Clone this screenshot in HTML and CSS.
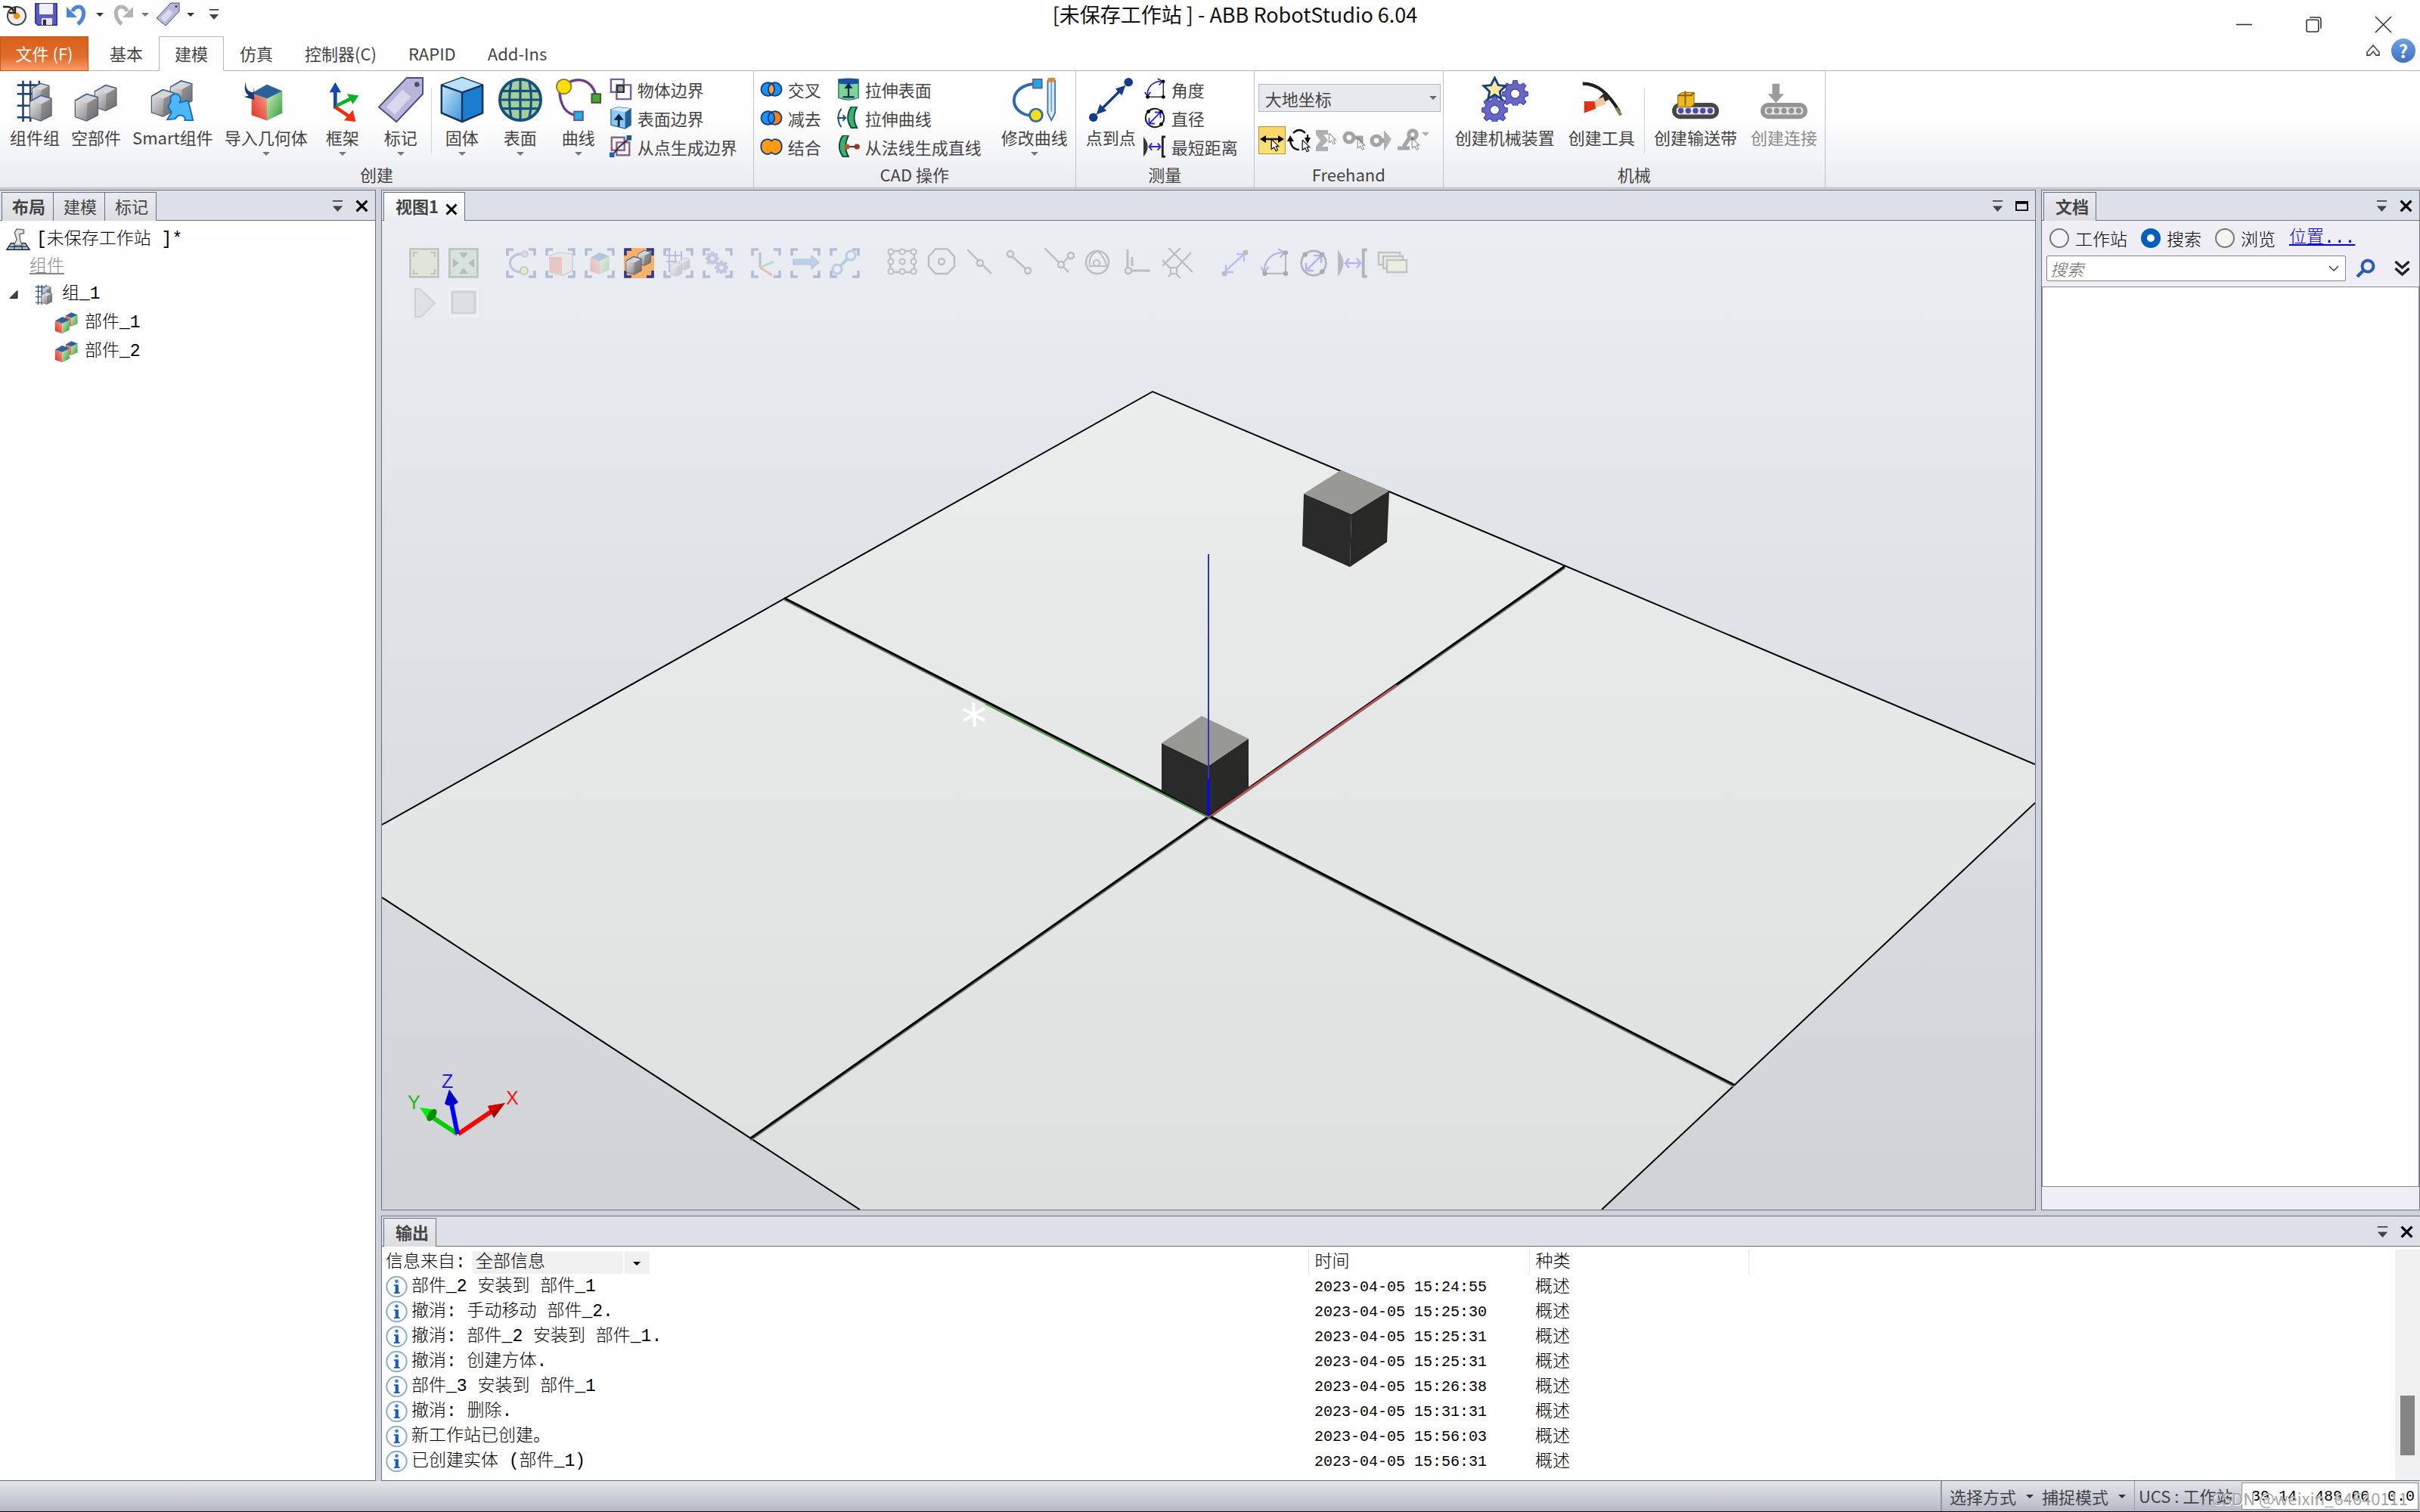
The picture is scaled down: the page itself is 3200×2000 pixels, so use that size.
FILE: index.html
```html
<!DOCTYPE html>
<html lang="zh-CN">
<head>
    <meta charset="UTF-8">
    <meta name="viewport" content="width=device-width, initial-scale=1.0">
    <title>[未保存工作站 ] - ABB RobotStudio 6.04</title>
    <link rel="stylesheet" href="styles.css">
</head>
<body>

<!-- Icon library -->
<svg class="defs" aria-hidden="true">
    <defs>
        <linearGradient id="gGray" x1="0" y1="0" x2="1" y2="1"><stop offset="0" stop-color="#f4f4f4"/><stop offset="1" stop-color="#6c6c6c"/></linearGradient>
        <linearGradient id="gRed" x1="0" y1="1" x2="1" y2="0"><stop offset="0" stop-color="#e02a1a"/><stop offset="1" stop-color="#f5a090"/></linearGradient>
        <linearGradient id="gGreen" x1="0" y1="0" x2="1" y2="1"><stop offset="0" stop-color="#cfeebc"/><stop offset="1" stop-color="#2f9c3c"/></linearGradient>
        <linearGradient id="gBlue" x1="0" y1="0" x2="1" y2="1"><stop offset="0" stop-color="#c4e4fa"/><stop offset="1" stop-color="#3f97dc"/></linearGradient>
        <linearGradient id="gPlane" x1="0" y1="0" x2="0" y2="1"><stop offset="0" stop-color="#ebedec"/><stop offset="1" stop-color="#dee0df"/></linearGradient>

        <symbol id="cube" viewBox="0 0 16 18">
            <path d="M1 5 8 1 15 3V14L8 17.500 1 15Z" fill="url(#gGray)" stroke="#54606e" stroke-width=".6"/>
            <path d="M1 5 8 1 15 3 8.500 6.500Z" fill="#d5d5d5"/>
            <path d="M8.500 6.500 15 3V14L8 17.500Z" fill="#6a6a6a" opacity=".5"/>
            <path d="M1 5 8 1 15 3" fill="none" stroke="#40659a" stroke-width=".8"/>
        </symbol>
        <symbol id="rgbcube" viewBox="0 0 16 18">
            <path d="M1 5 8 7.500V17.500L1 15Z" fill="url(#gRed)"/>
            <path d="M8 7.500 15 4V14L8 17.500Z" fill="url(#gGreen)"/>
            <path d="M1 5 8 1 15 4 8 7.500Z" fill="#2b619c"/>
        </symbol>
        <symbol id="gear" viewBox="0 0 20 20">
            <path d="M8.500 1h3l.5 2.500 2 .9 2.200-1.500 2 2.100-1.500 2.200.8 2 2.500.5v2.800l-2.500.5-.8 2 1.500 2.200-2 2-2.200-1.500-2 .9-.5 2.400h-3L8 18.600l-2-.9-2.200 1.500-2-2 1.500-2.200-.8-2L0 12.500V9.700l2.500-.5.8-2L1.800 5l2-2.100L6 4.400l2-.9ZM10 7.500a3.500 3.500 0 1 0 .01 0Z" fill="#6666c8" stroke="#4444a0" stroke-width=".7" fill-rule="evenodd"/>
        </symbol>

        <symbol id="i-group" viewBox="0 0 32 32">
            <path d="M8 3V31M13 3V31M19 3V14M4 6H23M4 12H14M4 20H14M4 28H14" fill="none" stroke="#1d3f78" stroke-width="1.300"/>
            <use href="#cube" x="13" y="4" width="14" height="15"/><use href="#cube" x="11" y="12" width="18" height="19"/>
        </symbol>
        <symbol id="i-part" viewBox="0 0 32 32">
            <use href="#cube" x="14" y="5" width="17" height="19"/><use href="#cube" x="0" y="11" width="19" height="20"/>
        </symbol>
        <symbol id="i-smart" viewBox="0 0 32 32">
            <use href="#cube" x="13" y="2" width="18" height="19"/><use href="#cube" x="0" y="8" width="19" height="20"/>
            <path d="M15 17a3.500 3.500 0 1 1 5.500 1l6-1.500 1.500 5 2 8.500h-5.500c1-3.500-4.500-5-6.500-1l-5.500.5 3-5-2.500-3.500Z" fill="#4cb8f5" stroke="#1b6cb5"/>
        </symbol>
        <symbol id="i-import" viewBox="0 0 32 32">
            <use href="#rgbcube" x="2" y="4" width="29" height="27"/>
            <path d="M2 4c0 5 2 7 6 7l-1-4 1 9-7-2 3-1C1 11 1 7 2 4Z" fill="#163a7c"/>
        </symbol>
        <symbol id="i-frame" viewBox="0 0 32 32">
            <path d="M11 22V9" stroke-width="2.400" fill="none" stroke="#1446b4"/>
            <path d="M11 4l4 7H7Z" fill="#1446b4"/><path d="M12 20l10-5" stroke="#0db02c" stroke-width="2.400"/><path d="M27 13l-8-1 4 7Z" fill="#0db02c"/>
            <path d="M11 21l9 6" stroke="#f02c10" stroke-width="2.400"/><path d="M25 31l-8-1 6-7Z" fill="#f02c10"/>
        </symbol>
        <symbol id="i-tag" viewBox="0 0 32 32">
            <path d="M1 21 20 1h11v11L13 31Z" fill="#b6b7da" stroke="#4a4d78"/><path d="M6 21 17 9l6 5-11 12Z" fill="#d8d8ee"/><circle cx="27" cy="5.500" r="1.700" fill="#4a4d78"/>
        </symbol>
        <symbol id="i-solid" viewBox="0 0 32 32">
            <path d="M2 6 16 1l14 5v19l-14 6-14-6Z" fill="#1a7ccc" stroke="#17345f" stroke-width="1.300"/>
            <path d="M2 6 16 1l14 5-14 5Z" fill="#b8e0fa"/><path d="M2.600 7 16 11.500V30L2.600 24.500Z" fill="url(#gBlue)"/><path d="M2 6l14 5 14-5M16 11v20" fill="none" stroke="#17345f" stroke-width="1.200"/>
        </symbol>
        <symbol id="i-globe" viewBox="0 0 32 32">
            <circle cx="16" cy="16" r="14" fill="#a3cf98" stroke="#17507e" stroke-width="2"/>
            <path d="M3 10H29M2 16H30M3 22H29M16 2V30M10 3C8 12 8 20 10 29M22 3C24 12 24 20 22 29" fill="none" stroke="#17507e" stroke-width="1.600"/>
        </symbol>
        <symbol id="i-curve" viewBox="0 0 32 32">
            <path d="M6 7C12 0 25 0 28 14M3 8C3 20 7 26 16 27" fill="none" stroke="#713a96" stroke-width="1.800"/>
            <circle cx="6" cy="7" r="5" fill="#ffdf00" stroke="#908030"/><rect x="25" y="12" width="6" height="6" fill="#46a832" stroke="#3b5c2c"/><rect x="13" y="24" width="6" height="6" fill="#22b0e0" stroke="#705090"/>
        </symbol>
        <symbol id="i-modcurve" viewBox="0 0 32 32">
            <path d="M18 5C-3 5-3 27 16 27" fill="none" stroke="#2c6aa8" stroke-width="2"/><rect x="15" y="2" width="6" height="6" fill="#18aee0" stroke="#7458a0"/>
            <circle cx="17" cy="26.500" r="4.300" fill="#f8de16" stroke="#2c6aa8" stroke-width="1.400"/><path d="M25 3h5v22l-2.500 5-2.500-5Z" fill="#dcecf8" stroke="#4478a8"/><path d="M25 1h5v3h-5Z" fill="#d88c2c"/><path d="M27.500 4V24" stroke="#7aa4c8"/>
        </symbol>
        <symbol id="i-p2p" viewBox="0 0 32 32">
            <circle cx="28" cy="4" r="3" fill="#143c8c"/><circle cx="4" cy="28" r="3" fill="#143c8c"/><path d="M9 23 23 9" stroke="#143c8c" stroke-width="1.800"/><path d="M26 6l-2.500 7-4.500-4.500ZM6 26l2.500-7 4.500 4.500Z" fill="#143c8c"/>
        </symbol>
        <symbol id="i-mech" viewBox="0 0 32 32">
            <use href="#gear" x="14" y="2" width="18" height="18"/><use href="#gear" x="0" y="13" width="18" height="18"/>
            <path d="M9 1l2.500 5 5 .5-4 4 1 5-4.500-3-4.500 3 1-5-4-4 5-.5Z" fill="#ffe9a0" stroke="#18407e" stroke-width="1.500"/>
        </symbol>
        <symbol id="i-tool" viewBox="0 0 32 32">
            <path d="M3 5C13 5 20 11 28 24" fill="none" stroke="#20201e" stroke-width="2.200"/><path d="M27 21l3 5-2 1-3-5Z" fill="#8c8258"/><path d="M18 11l4 4-5 3-3-3Z" fill="#2a2a28"/><path d="M10 17l7-3 2 5-9 3Z" fill="#f0c8a0"/><path d="M4 17h7l1 5-8 3Z" fill="#e03214"/>
        </symbol>
        <symbol id="i-conveyor" viewBox="0 0 32 32">
            <rect x="0" y="18" width="32" height="11" rx="5.500" fill="#474747"/><rect x="3" y="21" width="26" height="5" rx="2" fill="#e8e8f0"/>
            <g fill="#4a4ab4"><circle cx="6" cy="23.500" r="1.900"/><circle cx="11" cy="23.500" r="1.900"/><circle cx="16" cy="23.500" r="1.900"/><circle cx="21" cy="23.500" r="1.900"/><circle cx="26" cy="23.500" r="1.900"/></g>
            <path d="M4 13l3-2h8v8l-2 2H4Z" fill="#f0b820" stroke="#997010" stroke-width=".6"/><path d="M9 10v10M4 13h9l2-2" fill="none" stroke="#8a5c10"/>
        </symbol>
        <symbol id="i-connect" viewBox="0 0 32 32">
            <rect x="0" y="18" width="32" height="11" rx="5.500" fill="#949494"/><rect x="3" y="21" width="26" height="5" rx="2" fill="#e4e4e4"/>
            <g fill="#949494"><circle cx="6" cy="23.500" r="1.900"/><circle cx="11" cy="23.500" r="1.900"/><circle cx="16" cy="23.500" r="1.900"/><circle cx="21" cy="23.500" r="1.900"/><circle cx="26" cy="23.500" r="1.900"/></g>
            <path d="M8 5h5v7h3l-5.500 6L5 12h3Z" fill="#9c9c9c"/>
        </symbol>

        <symbol id="s-solidb" viewBox="0 0 16 16"><path d="M1 1h9v9H1ZM5 5h10v10H5Z" fill="none" stroke="#74609c" stroke-width="1.300"/><rect x="5.500" y="5.500" width="4.500" height="4.500" fill="#8ca08c" stroke="#202830"/></symbol>
        <symbol id="s-surfb" viewBox="0 0 16 16"><path d="M1 2l5-1.500 9 1V13l-4 2.500-10-2.500Z" fill="#8cc8f4" stroke="#2b5c90" stroke-width=".6"/><path d="M1 2l5-1.500 9 1-4 2.500Z" fill="#d4ecfc"/><path d="M11 4l4-2.500V13l-4 2.500Z" fill="#235f9c"/><path d="M6.500 14V8" stroke="#10243c" stroke-width="1.500"/><path d="M6.500 5l3.500 4.500H3Z" fill="#10243c"/></symbol>
        <symbol id="s-ptsb" viewBox="0 0 16 16"><path d="M1.500 1.500h9v9h-9ZM5 5h9v9H5Z" fill="none" stroke="#8c6484" stroke-width="1.300"/><path d="M2 14l5-6 7-6" fill="none" stroke="#1c2c58"/><rect x="12" y="0" width="3.500" height="3.500" fill="#22548c"/><rect x="0" y="12" width="3.500" height="3.500" fill="#1c64b4"/></symbol>
        <symbol id="s-and" viewBox="0 0 16 16"><circle cx="5.500" cy="8" r="4.700" fill="#1c90f4"/><circle cx="10.500" cy="8" r="4.700" fill="#1c90f4"/><path d="M8 4a4.700 4.700 0 0 1 0 8 4.700 4.700 0 0 1 0-8Z" fill="#ffa030"/><circle cx="5.500" cy="8" r="4.700" fill="none" stroke="#173f80"/><circle cx="10.500" cy="8" r="4.700" fill="none" stroke="#173f80"/></symbol>
        <symbol id="s-sub" viewBox="0 0 16 16"><circle cx="5.500" cy="8" r="4.700" fill="#1c90f4" stroke="#173f80"/><circle cx="10.500" cy="8" r="4.700" fill="#ff7c10" stroke="#173f80"/><path d="M8 4a4.700 4.700 0 0 1 0 8 4.700 4.700 0 0 1 0-8Z" fill="#1c90f4" stroke="#173f80"/></symbol>
        <symbol id="s-or" viewBox="0 0 16 16"><path d="M8 4C6 1.500.7 3 .7 8S6 14.500 8 12c2 2.500 7.300 1 7.300-4S10 1.500 8 4Z" fill="#ff9c14" stroke="#173f80"/></symbol>
        <symbol id="s-exsurf" viewBox="0 0 16 16"><path d="M1 1h14v13q-7 3-14 0Z" fill="#7cd49c" stroke="#1c7458" stroke-width=".7"/><path d="M1 1q7-1.500 14 0v3q-7 1-14 0Z" fill="#1c50a0"/><path d="M8 13V6M4 13.500h8" stroke="#0c2c4c" stroke-width="1.200"/><path d="M8 3.500l3 4H5Z" fill="#0c2c4c"/></symbol>
        <symbol id="s-excurve" viewBox="0 0 16 16"><path d="M3 1.500C0 5 0 11 3 14.500M0 8h6M4 6l2 2-2 2" fill="none" stroke="#1c4888"/><path d="M10 0h4q-4 8 0 15h-4Q5 8 10 0Z" fill="#3cb070" stroke="#0c4838"/></symbol>
        <symbol id="s-normal" viewBox="0 0 16 16"><path d="M4 0h4Q4 8 8 15H4Q-1 8 4 0Z" fill="#3cb070" stroke="#0c4838"/><path d="M6 8h8" stroke="#502010"/><circle cx="7" cy="8" r="1.900" fill="#c8502c"/><circle cx="14" cy="8" r="1.900" fill="#a03018"/></symbol>
        <symbol id="s-angle" viewBox="0 0 16 16"><path d="M14 3v10.500H3" fill="none" stroke="#303030" stroke-width=".8"/><path d="M3 13C2 7 7 2 13 2.500M10 .5l3.500 2L11 5M1 10l1.800 3L5 10" fill="none" stroke="#2c2cb0" stroke-width=".9"/><circle cx="14" cy="13.500" r="1.300"/><circle cx="3" cy="13.500" r="1.300"/><circle cx="14" cy="2.500" r="1.200"/></symbol>
        <symbol id="s-diam" viewBox="0 0 16 16"><circle cx="8" cy="8" r="6.500" fill="none" stroke="#202020" stroke-width="1.100"/><path d="M4.500 11.500l7-7M8 4h4v4M4 8v4h4" fill="none" stroke="#2424e8"/><circle cx="3.500" cy="3.500" r="1.300"/><circle cx="12.500" cy="3.500" r="1.300"/><circle cx="12.500" cy="12.500" r="1.300"/></symbol>
        <symbol id="s-dist" viewBox="0 0 16 16"><path d="M0 1q6 7 0 14Z" fill="#383838"/><path d="M15.500 1H13.500v14h2" fill="none" stroke="#202020" stroke-width="1.500"/><path d="M4 8h8M6 5.500 4 8l2 2.500M10 5.500 12 8l-2 2.500" fill="none" stroke="#2424e8"/></symbol>

        <symbol id="cursor" viewBox="0 0 10 14"><path d="M1 0v11l3-2 2 4 2-1-2-4h3Z" fill="#fff" stroke="#111"/></symbol>
        <symbol id="f-move" viewBox="0 0 16 16"><path d="M2 7h12M8 7v5" stroke="#111" stroke-width="1.200"/><path d="M0 7l4-2.500v5ZM16 7l-4-2.500v5Z"/><use href="#cursor" x="7" y="7" width="6" height="8.500"/></symbol>
        <symbol id="f-rot" viewBox="0 0 16 16"><path d="M4 3q4-4 8 0M2 8q1 6 6 6M13.500 4v3" fill="none" stroke="#111" stroke-width="1.100"/><path d="M0 8.500l2-4 2.500 4ZM11.500 6h4l-2 4Z"/><use href="#cursor" x="9.500" y="7.500" width="6" height="8.500"/></symbol>
        <symbol id="f-a" viewBox="0 0 16 16"><path d="M1 1h8v3H6l3 4-4 4h4v3H1v-3l3-4-3-4Z" fill="#b0b0b0"/><use href="#cursor" x="9" y="3" width="6" height="8" opacity=".4"/></symbol>
        <symbol id="f-b" viewBox="0 0 16 16"><circle cx="5" cy="6" r="3" fill="none" stroke="#a4a4a4" stroke-width="2.600"/><path d="M8 6h5v4" fill="none" stroke="#a4a4a4" stroke-width="2.500"/><use href="#cursor" x="10" y="6" width="6" height="9" opacity=".4"/></symbol>
        <symbol id="f-c" viewBox="0 0 16 16"><circle cx="5" cy="8" r="3" fill="none" stroke="#a4a4a4" stroke-width="2.600"/><path d="M7 8h5" stroke="#a4a4a4" stroke-width="3"/><path d="M10 1l5 6-5 8Z" fill="#b0b0b0"/></symbol>
        <symbol id="f-d" viewBox="0 0 16 16"><circle cx="11" cy="4" r="2.600" fill="none" stroke="#a4a4a4" stroke-width="2.500"/><path d="M9 6l-4 6M1 13h8" stroke="#a4a4a4" stroke-width="2.600"/><use href="#cursor" x="10" y="6" width="6" height="9" opacity=".4"/></symbol>

        <path id="corners" d="M1 5V1h4M15 1h4v4M19 15v4h-4M5 19H1v-4" fill="none" stroke="#2c3c94" stroke-width="1.800"/>
        <symbol id="v-all" viewBox="0 0 20 20"><rect x=".7" y=".7" width="18.500" height="18.500" fill="#c8d49c" stroke="#4c5840" stroke-width="1.300"/><path d="M3 6V3h3M14 3h3v3M17 14v3h-3M6 17H3v-3" fill="none" stroke="#4c5840"/></symbol>
        <symbol id="v-center" viewBox="0 0 20 20"><rect x=".7" y=".7" width="18.500" height="18.500" fill="#a8cca0" stroke="#4c5840" stroke-width="1.300"/><path d="M10 7L7 3h6ZM10 13l-3 4h6ZM7 10L3 7v6ZM13 10l4-3v6Z" fill="#2c3c60"/></symbol>
        <symbol id="v-curve" viewBox="0 0 20 20"><use href="#corners"/><path d="M12 4C0 3 0 16 10 16" fill="none" stroke="#3c68a4" stroke-width="1.600"/><circle cx="12.500" cy="4" r="2" fill="#90b0f0" stroke="#d06090"/><circle cx="12" cy="15" r="2.500" fill="#f4ec30" stroke="#3c68a4"/></symbol>
        <symbol id="v-surf" viewBox="0 0 20 20"><use href="#corners"/><path d="M3 5l6-2 9 1v11l-6 3-9-2Z" fill="#e6dcdc" stroke="#707070" stroke-width=".6"/><path d="M3 6h8v11l-8-1Z" fill="#ec6050"/></symbol>
        <symbol id="v-body" viewBox="0 0 20 20"><use href="#corners"/><use href="#rgbcube" x="2" y="2" width="16" height="16"/></symbol>
        <symbol id="v-part" viewBox="0 0 20 20"><rect width="20" height="20" fill="#f9b068"/><use href="#corners"/><use href="#cube" x="8" y="1" width="11" height="11"/><use href="#cube" x="0" y="5" width="13" height="13"/></symbol>
        <symbol id="v-grp" viewBox="0 0 20 20"><use href="#corners"/><path d="M4 2v14M8 2v8M2 5h10M2 9h7M12 2v6" stroke="#3a4a9c"/><use href="#cube" x="9" y="6" width="10" height="9"/><use href="#cube" x="4" y="9" width="9" height="10"/></symbol>
        <symbol id="v-mech" viewBox="0 0 20 20"><use href="#corners"/><use href="#gear" x="2" y="2" width="9" height="9"/><use href="#gear" x="8" y="8" width="9" height="9"/></symbol>
        <symbol id="v-frame" viewBox="0 0 20 20"><use href="#corners"/><path d="M6 13V3" stroke="#3a4a9c" stroke-width="1.500"/><path d="M6 13l9-4" stroke="#40b850" stroke-width="1.700"/><path d="M6 13l8 5" stroke="#e84030" stroke-width="1.500"/></symbol>
        <symbol id="v-arrow" viewBox="0 0 20 20"><use href="#corners"/><path d="M2 7.500h12V5l5 4.500-5 4.500v-3H2Z" fill="#4c84e8" stroke="#3a5a9c" stroke-width=".6"/></symbol>
        <symbol id="v-path" viewBox="0 0 20 20"><use href="#corners"/><circle cx="5" cy="14" r="3" fill="none" stroke="#3c78c0" stroke-width="1.500"/><circle cx="14" cy="5" r="3" fill="none" stroke="#3c78c0" stroke-width="1.500"/><path d="M7 12l5-5" stroke="#3c78c0" stroke-width="2"/></symbol>
        <symbol id="v-snap" viewBox="0 0 20 20"><path d="M2 2h16v14H2Z" fill="none" stroke="#444" stroke-width="1.200"/><g fill="#e8ecf0" stroke="#444"><circle cx="2.500" cy="2.500" r="1.800"/><circle cx="10" cy="2.500" r="1.800"/><circle cx="17.500" cy="2.500" r="1.800"/><circle cx="2.500" cy="9" r="1.800"/><circle cx="10" cy="9" r="1.800"/><circle cx="17.500" cy="9" r="1.800"/><circle cx="2.500" cy="15.500" r="1.800"/><circle cx="10" cy="15.500" r="1.800"/><circle cx="17.500" cy="15.500" r="1.800"/></g></symbol>
        <symbol id="v-snapc" viewBox="0 0 20 20"><path d="M6 .7h8l4.500 5v6.500L14 17H6l-4.500-5V5.700Z" fill="none" stroke="#444" stroke-width="1.200"/><circle cx="10" cy="9" r="2" fill="none" stroke="#444" stroke-width="1.200"/></symbol>
        <symbol id="v-mid" viewBox="0 0 20 20"><path d="M1 1l16 16" stroke="#444" stroke-width="1.200"/><circle cx="9.500" cy="10" r="2" fill="#e8ecf0" stroke="#444" stroke-width="1.200"/></symbol>
        <symbol id="v-end" viewBox="0 0 20 20"><path d="M3 4l12 11" stroke="#444" stroke-width="1.200"/><circle cx="3.500" cy="4" r="2" fill="#e8ecf0" stroke="#444" stroke-width="1.200"/><circle cx="15" cy="15" r="2" fill="#e8ecf0" stroke="#444" stroke-width="1.200"/></symbol>
        <symbol id="v-edge" viewBox="0 0 20 20"><path d="M0 0l16 16M11 11l6-6" stroke="#444" stroke-width="1.200"/><circle cx="11" cy="11" r="2" fill="#e8ecf0" stroke="#444" stroke-width="1.200"/><circle cx="17.500" cy="5" r="2" fill="#e8ecf0" stroke="#444" stroke-width="1.200"/></symbol>
        <symbol id="v-grav" viewBox="0 0 20 20"><circle cx="9" cy="9.500" r="7.500" fill="none" stroke="#444" stroke-width="1.200"/><path d="M9 2Q3 5 4 12h11Q14 6 9 2" fill="none" stroke="#444"/><circle cx="8.500" cy="10" r="2" fill="none" stroke="#444"/></symbol>
        <symbol id="v-orig" viewBox="0 0 20 20"><path d="M3 1v14h15M6 6v6" fill="none" stroke="#444" stroke-width="1.500"/><circle cx="3.500" cy="15" r="2" fill="#e8ecf0" stroke="#444" stroke-width="1.200"/></symbol>
        <symbol id="v-grid" viewBox="0 0 20 20"><path d="M4 0l16 16M0 8l12 12M0 12L12 0M4 19L19 3" fill="none" stroke="#444" stroke-width="1.200"/><rect x="5.500" y="13" width="4" height="4" fill="#e8ecf0" stroke="#444"/></symbol>
        <symbol id="v-p2p" viewBox="0 0 20 20"><path d="M4 15L16 4M4 11v5h5M11 4h5v5" fill="none" stroke="#4444ff" stroke-width="1.200"/><circle cx="3" cy="17" r="1.800" fill="#444"/><circle cx="17" cy="3" r="1.800" fill="#444"/></symbol>
        <symbol id="v-stack" viewBox="0 0 20 20"><g fill="#f2f2b8" stroke="#555" stroke-width="1.200"><path d="M1 3h14v8H1Z"/><path d="M4 5.500h13v8H4Z"/><path d="M6.500 8H19.500v8h-13Z"/></g></symbol>
        <symbol id="v-play" viewBox="0 0 20 20"><path d="M4 1h3l10 9.500L8 19.500H4Z" fill="#c4c4c8" stroke="#8c8c90"/></symbol>
        <symbol id="v-stop" viewBox="0 0 20 20"><rect width="20" height="20" fill="#fff"/><rect x="2.500" y="3" width="15" height="14" fill="#c0c0c4" stroke="#909094" stroke-width="1.500"/></symbol>

        <symbol id="info" viewBox="0 0 16 16"><circle cx="8" cy="8" r="7.300" fill="#fafdff" stroke="#8ab0c4" stroke-width="1.100"/><circle cx="8" cy="4" r="1.300" fill="#3a7ce8"/><path d="M6 6.500H9.300V12h1v1H6v-1h1V7.500H6Z" fill="#1c58c4"/></symbol>
        <symbol id="pin" viewBox="0 0 16 18"><path d="M1 1h14v2H1ZM1 9h14l-7 8Z" fill="#444"/></symbol>
        <symbol id="x" viewBox="0 0 16 16"><path d="M1.500 1.500l13 13M14.500 1.500l-13 13" stroke="#000" stroke-width="3" fill="none"/></symbol>
        <symbol id="i-robot" viewBox="0 0 16 16"><path d="M3 10.500h10l3 4.500H0Z" fill="#b8c8e4" stroke="#1c2838" stroke-width=".8"/><path d="M2 13h12M6 11l-1 4M10 11l1 4" stroke="#1c2838" stroke-width=".6"/><path d="M5 12h6l-1.500-3L9 4l3-.5V1L7 .5 5.500 3 7 8Z" fill="#e4e4e4" stroke="#6c7074" stroke-width=".8"/></symbol>
        <symbol id="i-rgbparts" viewBox="0 0 16 16"><use href="#rgbcube" x="6" y="0" width="11" height="11"/><use href="#rgbcube" x="-1" y="3" width="12" height="13"/></symbol>
        <symbol id="q-app" viewBox="0 0 16 16"><circle cx="9" cy="9" r="6" fill="#eee" stroke="#444"/><circle cx="9" cy="9" r="2.200" fill="#f09010"/><path d="M0 3h3q3 0 4 3M8 3v4H4" fill="none" stroke="#222" stroke-width="1.200"/></symbol>
        <symbol id="q-save" viewBox="0 0 16 16"><path d="M1 1h14v14H2.500L1 13.500Z" fill="#5c5cc0" stroke="#3c3c98"/><path d="M3.500 1h9v7h-9Z" fill="#eef0fc"/><path d="M5 10.500h7V15H5Z" fill="#e4e4ec"/><path d="M6 11.500h2V15H6Z" fill="#282850"/></symbol>
        <symbol id="q-undo" viewBox="0 0 16 16"><path d="M8.500 14.500C14 10 13 3 9 3 7 3 5.500 4.500 5 6" fill="none" stroke="#4c84dc" stroke-width="2.600"/><path d="M1 3v7h7Z" fill="#4c84dc"/></symbol>
        <symbol id="q-redo" viewBox="0 0 16 16"><path d="M7.500 14.500C2 10 3 3 7 3c2 0 3.500 1.500 4 3" fill="none" stroke="#b4b4b4" stroke-width="2.600"/><path d="M15 3v7H8Z" fill="#b4b4b4"/></symbol>
    </defs>
</svg>

<header class="titlebar">
    <div class="quick-access">
        <button type="button" aria-label="应用"><svg><use href="#q-app"/></svg></button>
        <button type="button" aria-label="保存"><svg><use href="#q-save"/></svg></button>
        <button type="button" aria-label="撤消"><svg><use href="#q-undo"/></svg></button>
        <i class="arrow dark"></i>
        <button type="button" aria-label="恢复"><svg><use href="#q-redo"/></svg></button>
        <i class="arrow"></i>
        <button type="button" aria-label="标记"><svg><use href="#i-tag"/></svg></button>
        <i class="arrow dark"></i>
        <button type="button" class="customize" aria-label="自定义"><svg><use href="#pin"/></svg></button>
    </div>
    <h1>[未保存工作站 ] - ABB RobotStudio 6.04</h1>
    <div class="window-buttons">
        <button type="button" aria-label="最小化"><svg viewBox="0 0 20 20"><path d="M0 10h20" stroke="#333" stroke-width="1.500"/></svg></button>
        <button type="button" aria-label="还原"><svg viewBox="0 0 20 20"><path d="M1 6q0-2 2-2h11q2 0 2 2v11q0 2-2 2H3q-2 0-2-2ZM5 1h11q3 0 3 3v11" fill="none" stroke="#333" stroke-width="1.500"/></svg></button>
        <button type="button" aria-label="关闭"><svg viewBox="0 0 20 20"><path d="M0 0l20 20M20 0 0 20" stroke="#333" stroke-width="1.500"/></svg></button>
    </div>
</header>

<nav class="ribbon-tabs">
    <button type="button" class="file-tab">文件 (F)</button>
    <button type="button" class="tab-basic">基本</button>
    <button type="button" class="active">建模</button>
    <button type="button">仿真</button>
    <button type="button">控制器(C)</button>
    <button type="button">RAPID</button>
    <button type="button">Add-Ins</button>
    <div class="ribbon-help">
        <button type="button" aria-label="折叠功能区"><svg class="chev" viewBox="0 0 20 16"><path d="M2 10l8-9 8 9v4h-4l-4-5-4 5H2Z" fill="#fff" stroke="#555" stroke-width="1.800"/></svg></button>
        <button type="button" class="help">?</button>
    </div>
</nav>

<section class="ribbon">
    <div class="group">
        <div class="group-body">
            <button type="button" class="big"><svg><use href="#i-group"/></svg><span>组件组</span></button>
            <button type="button" class="big"><svg><use href="#i-part"/></svg><span>空部件</span></button>
            <button type="button" class="big"><svg><use href="#i-smart"/></svg><span>Smart组件</span></button>
            <button type="button" class="big"><svg><use href="#i-import"/></svg><span>导入几何体</span><i class="arrow"></i></button>
            <button type="button" class="big"><svg><use href="#i-frame"/></svg><span>框架</span><i class="arrow"></i></button>
            <button type="button" class="big"><svg><use href="#i-tag"/></svg><span>标记</span><i class="arrow"></i></button>
            <div class="divider"></div>
            <button type="button" class="big"><svg><use href="#i-solid"/></svg><span>固体</span><i class="arrow"></i></button>
            <button type="button" class="big"><svg><use href="#i-globe"/></svg><span>表面</span><i class="arrow"></i></button>
            <button type="button" class="big"><svg><use href="#i-curve"/></svg><span>曲线</span><i class="arrow"></i></button>
            <div class="stack">
                <button type="button"><svg><use href="#s-solidb"/></svg>物体边界</button>
                <button type="button"><svg><use href="#s-surfb"/></svg>表面边界</button>
                <button type="button"><svg><use href="#s-ptsb"/></svg>从点生成边界</button>
            </div>
        </div>
        <div class="group-name">创建</div>
    </div>
    <div class="group">
        <div class="group-body">
            <div class="stack">
                <button type="button"><svg><use href="#s-and"/></svg>交叉</button>
                <button type="button"><svg><use href="#s-sub"/></svg>减去</button>
                <button type="button"><svg><use href="#s-or"/></svg>结合</button>
            </div>
            <div class="stack">
                <button type="button"><svg><use href="#s-exsurf"/></svg>拉伸表面</button>
                <button type="button"><svg><use href="#s-excurve"/></svg>拉伸曲线</button>
                <button type="button"><svg><use href="#s-normal"/></svg>从法线生成直线</button>
            </div>
            <button type="button" class="big"><svg><use href="#i-modcurve"/></svg><span>修改曲线</span><i class="arrow"></i></button>
        </div>
        <div class="group-name">CAD 操作</div>
    </div>
    <div class="group">
        <div class="group-body">
            <button type="button" class="big"><svg><use href="#i-p2p"/></svg><span>点到点</span></button>
            <div class="stack">
                <button type="button"><svg><use href="#s-angle"/></svg>角度</button>
                <button type="button"><svg><use href="#s-diam"/></svg>直径</button>
                <button type="button"><svg><use href="#s-dist"/></svg>最短距离</button>
            </div>
        </div>
        <div class="group-name">测量</div>
    </div>
    <div class="group">
        <div class="group-body freehand">
            <div class="coord-select">
                <select aria-label="参考坐标"><option>大地坐标</option></select>
            </div>
            <div class="freehand-tools">
                <button type="button" class="on" aria-label="移动"><svg><use href="#f-move"/></svg></button>
                <button type="button" aria-label="旋转"><svg><use href="#f-rot"/></svg></button>
                <button type="button" aria-label="手动关节"><svg><use href="#f-a"/></svg></button>
                <button type="button" aria-label="手动线性"><svg><use href="#f-b"/></svg></button>
                <button type="button" aria-label="手动重定位"><svg><use href="#f-c"/></svg></button>
                <button type="button" aria-label="多个机器人手动操作"><svg><use href="#f-d"/></svg></button>
                <i class="arrow"></i>
            </div>
        </div>
        <div class="group-name">Freehand</div>
    </div>
    <div class="group">
        <div class="group-body machine">
            <button type="button" class="big"><svg><use href="#i-mech"/></svg><span>创建机械装置</span></button>
            <button type="button" class="big"><svg><use href="#i-tool"/></svg><span>创建工具</span></button>
            <div class="divider"></div>
            <button type="button" class="big"><svg><use href="#i-conveyor"/></svg><span>创建输送带</span></button>
            <button type="button" class="big" disabled><svg><use href="#i-connect"/></svg><span>创建连接</span></button>
        </div>
        <div class="group-name">机械</div>
    </div>
</section>

<main class="workspace">
    <section class="panel layout-panel">
        <div class="panel-head">
            <button type="button" class="tab active">布局</button>
            <button type="button" class="tab">建模</button>
            <button type="button" class="tab">标记</button>
            <div class="panel-tools"><svg><use href="#pin"/></svg><svg><use href="#x"/></svg></div>
        </div>
        <ul class="tree">
            <li><svg class="robot"><use href="#i-robot"/></svg>[未保存工作站 ]*</li>
            <li class="category">组件</li>
            <li class="level1"><svg class="expander" viewBox="0 0 12 12"><path d="M11 1v10H1Z" fill="#444" stroke="#111"/></svg><svg><use href="#i-group"/></svg>组_1</li>
            <li class="level2"><svg><use href="#i-rgbparts"/></svg>部件_1</li>
            <li class="level2"><svg><use href="#i-rgbparts"/></svg>部件_2</li>
        </ul>
    </section>

    <section class="panel view-panel">
        <div class="panel-head">
            <button type="button" class="tab view-tab">视图1 <svg><use href="#x"/></svg></button>
            <div class="panel-tools"><svg><use href="#pin"/></svg><svg viewBox="0 0 18 14"><path d="M1 1h16v12H1ZM1 3h16" fill="none" stroke="#000" stroke-width="2"/></svg></div>
        </div>
        <div class="viewport">
            <svg class="scene" viewBox="505 292 2186 1308" preserveAspectRatio="xMidYMid slice">
                <path d="M1524 518 2691 1011V1062L2118 1600H1137L505 1187V1091Z" fill="url(#gPlane)"/>
                <g fill="none" stroke="#000" stroke-width="2">
                    <path d="M505 1091 1524 518 2691 1011M2691 1062 2118 1600M1137 1600 505 1187"/>
                    <path d="M1037 793 2293 1437M2069 751 992 1508" stroke="#777" stroke-width="3"/>
                    <path d="M1037 791 2293 1435M2069 749 992 1506" stroke-width="3"/>
                </g>
                <path d="M1303 931 1598 1081" stroke="#4c9c4c" stroke-width="2"/>
                <path d="M1847 906 1598 1081" stroke="#d84c4c" stroke-width="2"/>
                <path d="M1724 653 1787 680 1785 750 1722 722Z" fill="#2a2a2a"/><path d="M1787 680 1837 649 1834 717 1785 750Z" fill="#282827"/><path d="M1773 622 1837 649 1787 680 1724 653Z" fill="#989994"/>
                <path d="M1536 983 1598 1013V1079L1536 1046Z" fill="#2a2a2a"/><path d="M1598 1013 1651 977V1041L1598 1079Z" fill="#282827"/><path d="M1589 947 1651 977 1598 1013 1536 983Z" fill="#989994"/>
                <path d="M1598 733V1079" stroke="#3030cc" stroke-width="2"/><path d="M1598 1030V1079" stroke="#0c0cd8" stroke-width="4"/>
                <path d="M1287 929 1289 961M1274 938 1302 953M1302 937 1274 953" stroke="#fff" stroke-width="4"/>
                <path d="M605 1500 566 1474" stroke="#00d000" stroke-width="6"/><path d="M555 1465 577 1468 567 1483Z" fill="#00f000"/><ellipse cx="571" cy="1475" rx="5" ry="9" transform="rotate(35 571 1475)" fill="#008c00"/>
                <path d="M606 1500 650 1470" stroke="#f00" stroke-width="6"/><path d="M668 1459 645 1463 653 1479Z" fill="#a00000"/><path d="M668 1459 645 1463 649 1471Z" fill="#e00000"/>
                <path d="M605 1500 597 1460" stroke="#00f" stroke-width="6"/><path d="M594 1441 588 1460Q596 1466 606 1458Z" fill="#0000d0"/>
                <text x="584" y="1439" class="axis-z">Z</text><text x="539" y="1467" class="axis-y">Y</text><text x="669" y="1461" class="axis-x">X</text>
            </svg>
            <div class="view-toolbar">
                <div class="tool-row">
                    <svg><use href="#v-all"/></svg><svg><use href="#v-center"/></svg>
                    <svg class="gap"><use href="#v-curve"/></svg><svg><use href="#v-surf"/></svg><svg><use href="#v-body"/></svg><svg class="selected"><use href="#v-part"/></svg><svg><use href="#v-grp"/></svg><svg><use href="#v-mech"/></svg>
                    <svg class="small-gap"><use href="#v-frame"/></svg><svg><use href="#v-arrow"/></svg><svg><use href="#v-path"/></svg>
                    <svg class="gap"><use href="#v-snap"/></svg><svg><use href="#v-snapc"/></svg><svg><use href="#v-mid"/></svg><svg><use href="#v-end"/></svg><svg><use href="#v-edge"/></svg><svg><use href="#v-grav"/></svg><svg><use href="#v-orig"/></svg><svg><use href="#v-grid"/></svg>
                    <svg class="gap"><use href="#v-p2p"/></svg><svg><use href="#s-angle"/></svg><svg><use href="#s-diam"/></svg><svg><use href="#s-dist"/></svg><svg><use href="#v-stack"/></svg>
                </div>
                <div class="tool-row">
                    <svg><use href="#v-play"/></svg><svg><use href="#v-stop"/></svg>
                </div>
            </div>
        </div>
    </section>

    <section class="panel doc-panel">
        <div class="panel-head">
            <button type="button" class="tab active">文档</button>
            <div class="panel-tools"><svg><use href="#pin"/></svg><svg><use href="#x"/></svg></div>
        </div>
        <div class="doc-body">
            <form class="doc-options">
                <input type="radio" name="scope" id="scope-station"><label for="scope-station">工作站</label>
                <input type="radio" name="scope" id="scope-search" checked><label for="scope-search">搜索</label>
                <input type="radio" name="scope" id="scope-browse"><label for="scope-browse">浏览</label>
                <a href="#">位置...</a>
            </form>
            <div class="doc-search">
                <div class="search-box">
                    <input type="text" placeholder="搜索" aria-label="搜索">
                    <svg viewBox="0 0 14 10"><path d="M1 2l6 6 6-6" fill="none" stroke="#333" stroke-width="1.300"/></svg>
                </div>
                <svg class="magnifier" viewBox="0 0 26 26"><circle cx="16" cy="10" r="7.500" fill="none" stroke="#2c5cb0" stroke-width="4"/><path d="M10 16l-8 8" stroke="#2c5cb0" stroke-width="4.500"/></svg>
                <svg class="more" viewBox="0 0 20 22"><path d="M1 2l9 8 9-8M1 11l9 8 9-8" fill="none" stroke="#222" stroke-width="3.500"/></svg>
            </div>
            <div class="doc-results"></div>
        </div>
    </section>

    <section class="panel output-panel">
        <div class="panel-head">
            <button type="button" class="tab active">输出</button>
            <div class="panel-tools"><svg><use href="#pin"/></svg><svg><use href="#x"/></svg></div>
        </div>
        <div class="output-body">
            <table>
                <colgroup><col class="col-msg"><col class="col-time"><col class="col-kind"><col></colgroup>
                <thead>
                    <tr>
                        <th>
                            <div class="source">
                                <label for="source">信息来自:</label>
                                <div class="source-select"><select id="source"><option>全部信息</option></select></div>
                            </div>
                        </th>
                        <th>时间</th>
                        <th>种类</th>
                        <th></th>
                    </tr>
                </thead>
                <tbody>
                    <tr><td><svg><use href="#info"/></svg>部件_2 安装到 部件_1</td><td class="time">2023-04-05 15:24:55</td><td>概述</td><td></td></tr>
                    <tr><td><svg><use href="#info"/></svg>撤消: 手动移动 部件_2.</td><td class="time">2023-04-05 15:25:30</td><td>概述</td><td></td></tr>
                    <tr><td><svg><use href="#info"/></svg>撤消: 部件_2 安装到 部件_1.</td><td class="time">2023-04-05 15:25:31</td><td>概述</td><td></td></tr>
                    <tr><td><svg><use href="#info"/></svg>撤消: 创建方体.</td><td class="time">2023-04-05 15:25:31</td><td>概述</td><td></td></tr>
                    <tr><td><svg><use href="#info"/></svg>部件_3 安装到 部件_1</td><td class="time">2023-04-05 15:26:38</td><td>概述</td><td></td></tr>
                    <tr><td><svg><use href="#info"/></svg>撤消: 删除.</td><td class="time">2023-04-05 15:31:31</td><td>概述</td><td></td></tr>
                    <tr><td><svg><use href="#info"/></svg>新工作站已创建。</td><td class="time">2023-04-05 15:56:03</td><td>概述</td><td></td></tr>
                    <tr><td><svg><use href="#info"/></svg>已创建实体 (部件_1)</td><td class="time">2023-04-05 15:56:31</td><td>概述</td><td></td></tr>
                </tbody>
            </table>
            <div class="scrollbar"><div class="thumb"></div></div>
        </div>
    </section>
</main>

<footer class="statusbar">
    <div class="modes">
        <button type="button">选择方式<i class="arrow dark"></i></button>
        <button type="button">捕捉模式<i class="arrow dark"></i></button>
    </div>
    <div class="ucs">UCS : 工作站</div>
    <input type="text" class="coords" aria-label="坐标" value="-39.14  489.66  0.0" readonly>
    <div class="watermark">CSDN @weixin_64640111</div>
</footer>

</body>
</html>
```
FILE: styles.css
```css
* {
    box-sizing: border-box;
}
body {
    margin: 0;
    height: 100vh;
    display: flex;
    flex-direction: column;
    overflow: hidden;
    background: #cdd2dc;
    color: #444;
    font-family: "Noto Sans CJK SC", "Noto Sans", sans-serif;
    font-size: 22px;
    line-height: 28px;
}
button, select, input {
    font: inherit;
    color: inherit;
    background: none;
    border: none;
    margin: 0;
    padding: 0;
}
.defs {
    position: absolute;
    width: 0;
    height: 0;
}
.arrow {
    border: 5px solid transparent;
    border-top-color: #777;
    border-bottom: none;
}
.arrow.dark {
    border-top-color: #333;
}

/* Title bar */
.titlebar {
    display: grid;
    grid-template-columns: 1fr auto 1fr;
    height: 48px;
    background: #fefefe;
}
.titlebar h1 {
    margin: 0;
    padding: 2px 0 0 66px;
    font-size: 27px;
    font-weight: 400;
    line-height: 34px;
    color: #111;
}
.quick-access {
    display: flex;
    align-items: center;
    gap: 9px;
    height: 38px;
    padding-left: 4px;
}
.quick-access button, .quick-access svg {
    display: block;
    width: 32px;
    height: 32px;
}
.quick-access .customize, .quick-access .customize svg {
    width: 14px;
    height: 18px;
}
.quick-access .customize {
    margin-left: 10px;
}
.window-buttons {
    display: flex;
    justify-content: flex-end;
    gap: 71px;
    padding: 16px 38px 0 0;
}
.window-buttons svg {
    display: block;
    width: 21px;
    height: 21px;
    overflow: visible;
}

/* Ribbon tabs */
.ribbon-tabs {
    display: flex;
    height: 46px;
    padding-right: 6px;
    background: #fefefe;
    border-bottom: 1px solid #b8b8b8;
}
.ribbon-tabs > button {
    height: 46px;
    padding: 0 20px 3px;
    border: 1px solid transparent;
}
.ribbon-tabs .file-tab {
    width: 117px;
    padding: 0 0 3px;
    color: #fff;
    background: linear-gradient(#d9601c, #e06c2c 60%, #fb9c68);
    border: 1px solid #c0581c;
}
.ribbon-tabs .tab-basic {
    margin-left: 7px;
}
.ribbon-tabs .active {
    background: #fff;
    border-color: #b8b8b8;
    border-bottom-color: #fff;
}
.ribbon-help {
    display: flex;
    align-items: center;
    gap: 14px;
    margin-left: auto;
    padding-bottom: 8px;
}
.ribbon-help .chev {
    display: block;
    width: 20px;
    height: 16px;
}
.ribbon-help .help {
    width: 32px;
    height: 32px;
    border-radius: 50%;
    background: linear-gradient(#6fa0e0, #3f70c4);
    color: #fff;
    font-size: 24px;
    font-weight: 700;
}

/* Ribbon */
.ribbon {
    display: flex;
    height: 155px;
    background: linear-gradient(#fff, #fefefe 40%, #e9ebef);
    border-bottom: 1px solid #b4b6b8;
}
.group {
    display: flex;
    flex-direction: column;
    border-right: 1px solid #c0c3c8;
}
.group-body {
    display: flex;
    flex: 1;
    gap: 1px;
    padding: 5px 3px 0 6px;
}
.group-name {
    height: 32px;
    text-align: center;
}
.big {
    display: flex;
    flex-direction: column;
    align-items: center;
    min-width: 76px;
    padding: 2px 7px 0;
}
.big svg {
    width: 62px;
    height: 62px;
}
.big span {
    margin: 4px 0 6px;
}
.big:disabled {
    color: #8c8c8c;
}
.divider {
    width: 1px;
    height: 86px;
    margin: 18px 1px 0;
    background: #d0d3d8;
}
.stack {
    margin: 0 18px 0 2px;
}
.stack button {
    display: flex;
    align-items: center;
    gap: 7px;
    height: 38px;
}
.stack svg {
    width: 30px;
    height: 30px;
}
.group-body.freehand {
    flex-direction: column;
    gap: 19px;
    padding: 17px 3px 0 5px;
}
.group-body.machine {
    gap: 4px;
    padding-left: 8px;
}
.coord-select {
    position: relative;
    width: 241px;
}
.coord-select select {
    appearance: none;
    width: 100%;
    height: 37px;
    padding: 0 8px;
    background: #e8e9eb;
    border: 1px solid #a8bcd8;
}
.coord-select::after, .source-select::after {
    content: "";
    position: absolute;
    top: 16px;
    right: 5px;
    border: 5px solid transparent;
    border-top-color: #666;
    border-bottom: none;
}
.freehand-tools {
    display: flex;
}
.freehand-tools button {
    width: 36px;
    height: 37px;
    border: 1px solid transparent;
}
.freehand-tools .on {
    background: linear-gradient(#fcd468, #ffe478);
    border-color: #c09030;
}
.freehand-tools svg {
    display: block;
    width: 32px;
    height: 32px;
    margin: 0 auto;
}
.freehand-tools .arrow {
    align-self: flex-start;
    margin-top: 8px;
    border-top-color: #aaa;
}

/* Docked panels */
.workspace {
    flex: 1;
    min-height: 0;
    display: grid;
    grid-template-columns: 497px 1fr 501px;
    grid-template-rows: 1fr 351px;
    gap: 7px;
    padding-top: 2px;
}
.panel {
    display: flex;
    flex-direction: column;
    min-width: 0;
    min-height: 0;
    background: #fff;
    border: 1px solid #6c727a;
}
.layout-panel {
    grid-row: 1 / 3;
    border-left: none;
}
.output-panel {
    grid-column: 2 / 4;
    border-right: none;
}
.panel-head {
    display: flex;
    flex: none;
    height: 40px;
    padding: 2px 0 0 2px;
    background: #dce0e8;
    border-bottom: 1px solid #6c727a;
}
.tab {
    height: 38px;
    padding: 0 11px 4px;
    background: linear-gradient(#e8ebf0, #dcdde0);
    border: 1px solid #6c727a;
    border-bottom: none;
}
.layout-panel .tab {
    padding: 0 10px 4px 13px;
}
.tab + .tab {
    border-left: none;
}
.tab.active, .view-tab {
    font-weight: 700;
}
.doc-panel .tab, .output-panel .tab, .view-panel .tab {
    padding: 0 9px 4px 15px;
}
.panel .view-tab {
    background: linear-gradient(#fff, #e9edf2);
}
.view-tab svg {
    width: 16px;
    height: 16px;
    margin-left: 4px;
    vertical-align: -3px;
}
.panel-tools {
    display: flex;
    align-items: center;
    gap: 15px;
    margin-left: auto;
    padding-right: 9px;
}
.panel-tools svg {
    width: 17px;
    height: 17px;
}

/* Layout tree */
.tree {
    margin: 0;
    padding: 6px 0 0 8px;
    list-style: none;
    color: #000;
    font-family: "Liberation Mono", "Noto Sans CJK SC", monospace;
    font-weight: 300;
    font-size: 23px;
}
.tree li {
    display: flex;
    align-items: center;
    height: 38px;
    white-space: pre;
}
.tree svg {
    width: 32px;
    height: 30px;
    margin-right: 8px;
}
.tree .category {
    height: 34px;
    padding-left: 31px;
    color: #888;
    text-decoration: underline;
}
.tree .level1 {
    padding-left: 4px;
}
.tree .expander {
    width: 12px;
    height: 13px;
    margin-right: 18px;
}
.tree .level2 {
    padding-left: 64px;
}

/* 3D view */
.viewport {
    position: relative;
    flex: 1;
    min-height: 0;
    background: linear-gradient(#eaeef2, #e1e4e9 30%, #d8dbdf 65%, #d1d2d5);
}
.scene {
    position: absolute;
    width: 100%;
    height: 100%;
    font-family: "Liberation Sans", sans-serif;
    font-size: 25px;
}
.axis-x {
    fill: #f01818;
}
.axis-y {
    fill: #18b818;
}
.axis-z {
    fill: #1c1cf0;
}
.view-toolbar {
    position: relative;
    padding: 36px;
}
.tool-row {
    display: flex;
    gap: 12px;
    margin-bottom: 12px;
}
.tool-row svg {
    width: 40px;
    height: 40px;
    opacity: .27;
}
.tool-row .selected {
    opacity: 1;
}
.tool-row .gap {
    margin-left: 24px;
}
.tool-row .small-gap {
    margin-left: 12px;
}

/* Documents */
.doc-body {
    display: flex;
    flex: 1;
    flex-direction: column;
    padding-bottom: 30px;
    background: #eeeef4;
}
.doc-options {
    display: flex;
    align-items: center;
    height: 46px;
    padding-left: 10px;
    color: #000;
    font-family: "Noto Sans CJK SC", sans-serif;
    font-weight: 300;
    font-size: 23px;
}
.doc-options input {
    appearance: none;
    width: 26px;
    height: 26px;
    margin-right: 8px;
    border: 2px solid #777;
    border-radius: 50%;
    background: #f3f3f3;
}
.doc-options input:checked {
    border: 8px solid #0060bc;
    background: #fff;
}
.doc-options label {
    margin-right: 18px;
}
.doc-options a {
    color: #00f;
    font-family: "Liberation Mono", "Noto Sans CJK SC", monospace;
}
.doc-search {
    display: flex;
    align-items: center;
    gap: 12px;
    height: 40px;
    padding: 0 12px 6px 6px;
}
.search-box {
    position: relative;
    flex: 1;
}
.search-box input {
    width: 100%;
    height: 34px;
    padding: 0 4px;
    background: #fff;
    border: 1px solid #888;
    border-radius: 2px;
    font-weight: 300;
}
.search-box input::placeholder {
    color: #666;
    font-style: italic;
}
.search-box svg {
    position: absolute;
    top: 12px;
    right: 9px;
    width: 14px;
    height: 10px;
}
.magnifier {
    width: 28px;
    height: 26px;
}
.more {
    width: 21px;
    height: 22px;
    margin-left: 12px;
}
.doc-results {
    flex: 1;
    margin-top: 1px;
    background: #fff;
    border: 1px solid #828790;
}

/* Output */
.output-body {
    display: flex;
    flex: 1;
    min-height: 0;
    padding-top: 4px;
    color: #000;
}
.output-body table {
    flex: 1;
    width: 100%;
    align-self: flex-start;
    table-layout: fixed;
    border-collapse: collapse;
    font-family: "Liberation Mono", "Noto Sans CJK SC", monospace;
    font-weight: 300;
    font-size: 23px;
}
.col-msg {
    width: 1225px;
}
.col-time {
    width: 292px;
}
.col-kind {
    width: 290px;
}
th, td {
    height: 33px;
    padding: 0 0 0 8px;
    line-height: 30px;
    font-weight: 300;
    text-align: left;
    white-space: nowrap;
}
th {
    border-right: 1px solid #e4e4e4;
}
th:last-child {
    border-right: none;
}
td:first-child, th:first-child {
    padding-left: 5px;
}
td svg {
    width: 29px;
    height: 30px;
    margin-right: 5px;
    vertical-align: middle;
}
.time {
    font-size: 20px;
}
.source {
    display: flex;
    align-items: center;
}
.source label {
    width: 115px;
}
.source-select {
    position: relative;
}
.source-select select {
    appearance: none;
    width: 234px;
    height: 30px;
    padding: 0 4px;
    background: linear-gradient(90deg, #f0f0f0 199px, #fff 199px, #fff 201px, #f0f0f0 201px);
}
.source-select::after {
    top: 14px;
    right: 12px;
    border-top-color: #000;
}
.scrollbar {
    width: 33px;
    padding: 193px 7px 0;
    background: #f0f0f0;
}
.thumb {
    height: 79px;
    background: #858585;
}

/* Status bar */
.statusbar {
    position: relative;
    display: flex;
    justify-content: flex-end;
    flex: none;
    height: 41px;
    background: linear-gradient(#e4e5e9, #b4bac6);
    border-bottom: 1px solid #000;
}
.modes {
    display: flex;
    gap: 11px;
    padding: 0 11px 0 10px;
    border-left: 2px solid #9498a4;
    border-right: 1px solid #9498a4;
}
.modes button {
    display: flex;
    align-items: center;
    gap: 13px;
}
.ucs {
    width: 141px;
    padding: 5px 0 0 5px;
    white-space: nowrap;
}
.coords {
    width: 234px;
    height: 36px;
    margin: 2px 2px 0 0;
    background: #fff;
    border: 1px solid #8c919c;
    color: #000;
    font-family: "Liberation Mono", monospace;
    font-size: 20px;
    white-space: pre;
}
.watermark {
    position: absolute;
    right: 16px;
    bottom: 4px;
    color: #a4a4a4;
    text-shadow: 1px 1px 0 #fff;
}
```
